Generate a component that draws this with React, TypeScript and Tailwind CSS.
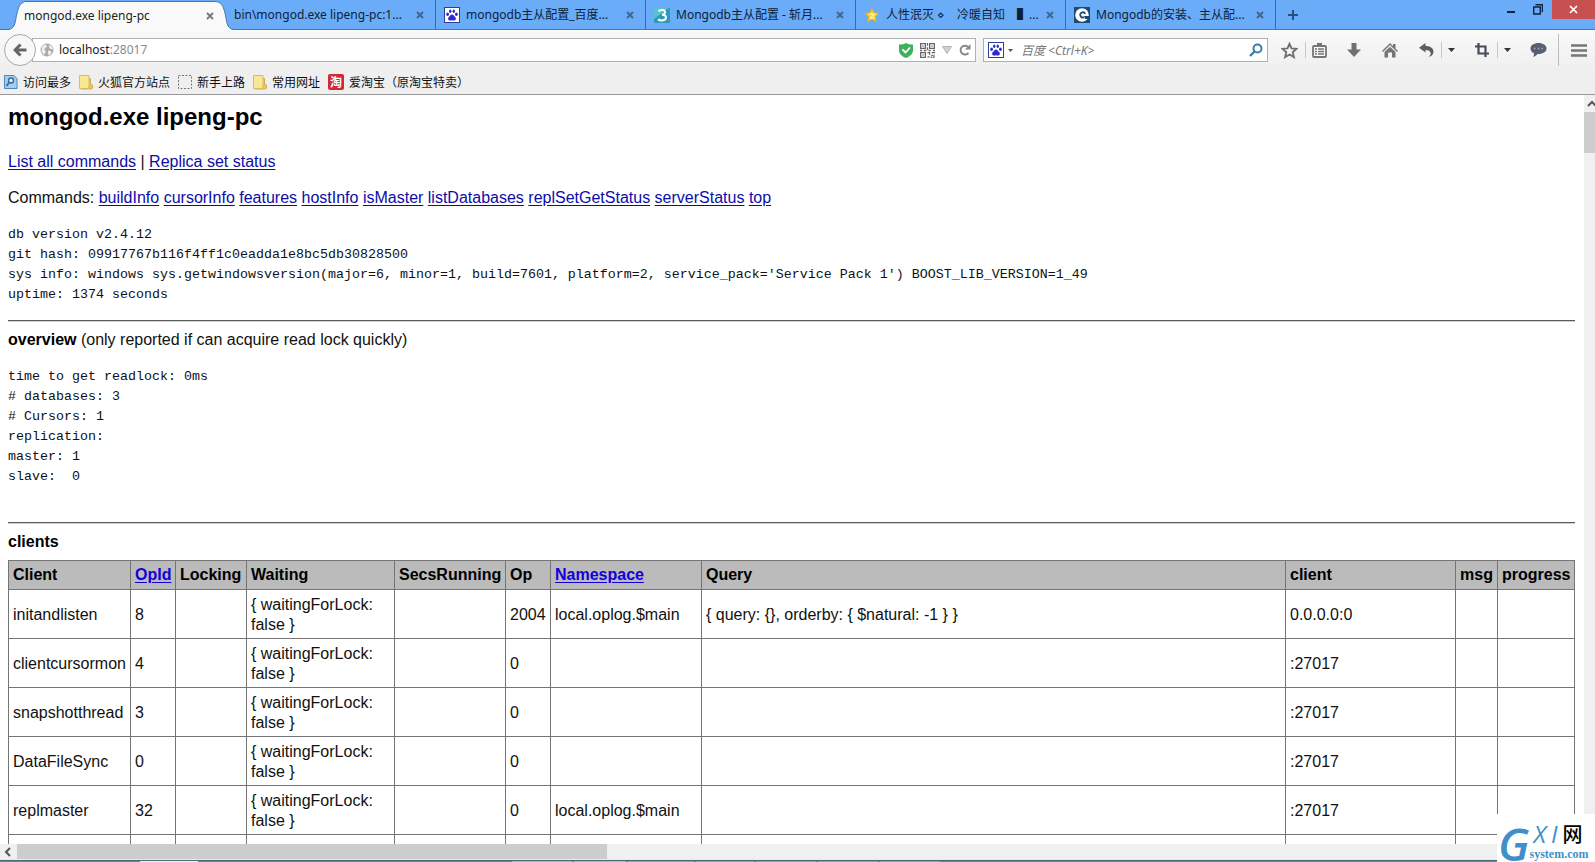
import type { ReactNode } from "react";

const UI = "font-['Noto_Sans','Noto_Sans_CJK_SC',sans-serif]";

function Paw({ boxed = true }: { boxed?: boolean }) {
  return (
    <svg width="16" height="16" viewBox="0 0 16 16" className="shrink-0" aria-hidden="true">
      <rect x="0.5" y="0.5" width="15" height="15" fill="#fff" stroke={boxed ? "#2a3f9a" : "#fff"} />
      <g fill="#2a2ad0">
        <ellipse cx="3.6" cy="7.2" rx="1.4" ry="1.7" />
        <ellipse cx="6.2" cy="4.2" rx="1.2" ry="1.8" />
        <ellipse cx="9.8" cy="4.2" rx="1.2" ry="1.8" />
        <ellipse cx="12.4" cy="7.2" rx="1.4" ry="1.7" />
        <path d="M8 7.400c1.500 0 2 1.500 3.100 2.500 1.400 1.300.8 3.700-1.100 3.700-.8 0-1.300-.3-2-.3s-1.200.3-2 .3c-1.900 0-2.500-2.400-1.100-3.700C6 8.900 6.500 7.400 8 7.400z" />
      </g>
    </svg>
  );
}

function SpiralIcon() {
  return (
    <svg width="16" height="16" viewBox="0 0 16 16" className="shrink-0" aria-hidden="true">
      <rect width="16" height="16" rx="1" fill="#2a9bb8" />
      <path d="M0 0h16L0 12z" fill="#5cc0d4" />
      <path d="M4.500 4.300C6.500 2.400 11 2.600 11 5.200c0 1.600-1.500 2.300-3 2.500 2 0 4 .8 4 2.800 0 3-4.800 3.600-8 2" fill="none" stroke="#fff" strokeWidth="2" />
    </svg>
  );
}

function StarIcon() {
  return (
    <svg width="16" height="16" viewBox="0 0 16 16" className="shrink-0" aria-hidden="true">
      <path d="M8 1.500l2 4.300 4.800.6-3.500 3.300.9 4.800L8 12.200l-4.200 2.300.9-4.800L1.200 6.400 6 5.800z" fill="#fbd22c" stroke="#e8b21c" strokeWidth="1" strokeLinejoin="round" />
      <path d="M5.500 7.200h5l-4 3.600h4.200" fill="none" stroke="#fff3a8" strokeWidth="1.200" />
    </svg>
  );
}

function CIcon() {
  return (
    <svg width="16" height="16" viewBox="0 0 16 16" className="shrink-0" aria-hidden="true">
      <rect width="16" height="16" fill="#1d4a72" />
      <circle cx="8" cy="8" r="6.800" fill="#fff" />
      <path d="M12.500 5.500A4.300 4.300 0 1 0 11 12l-1-2.200A2 2 0 1 1 10 6.500l2.500 1z" fill="#1d4a72" transform="translate(1.600 1.400) scale(.8)" />
      <path d="M10 9h6v3h-5z" fill="#1d4a72" />
    </svg>
  );
}

function CloseGlyph({ color = "#3f6590" }: { color?: string }) {
  return (
    <svg width="8" height="8" viewBox="0 0 8 8" className="block" aria-hidden="true">
      <path d="M1 1l6 6M7 1L1 7" stroke={color} strokeWidth="1.900" />
    </svg>
  );
}

function Tab({ title, icon }: { title: string; icon?: ReactNode }) {
  return (
    <div role="tab" aria-selected="false" className="flex h-full w-[210px] min-w-0 items-center gap-1.5 border-r border-[#3a6a9e] pr-[11px] pl-2 text-[#0b1f38]">
      {icon}
      <span className="min-w-0 flex-1 whitespace-pre">{title}</span>
      <button type="button" aria-label="关闭标签页">
        <CloseGlyph />
      </button>
    </div>
  );
}

function TabStrip() {
  return (
    <div className="flex h-[30px] shrink-0 items-stretch border-b border-[#4579ad] bg-[#6aacf8] text-[12px]">
      <div role="tablist" className="flex min-w-0 items-stretch">
        <div role="tab" aria-selected="true" className="-mb-px ml-2 flex w-[226px] items-stretch pt-px">
          <svg width="20" height="29" viewBox="0 0 20 29" className="shrink-0" aria-hidden="true">
            <path d="M0 29C8 28 7 20 9 12 11 4 13 .5 20 .5V29z" fill="#f9f9f9" />
            <path d="M0 28.500C8 27.500 7 20 9 12 11 4 13 .5 20 .5" fill="none" stroke="#4579ad" />
          </svg>
          <div className="-ml-1 flex min-w-0 flex-1 items-center border-t border-[#4579ad] bg-[#f9f9f9] text-[#222]">
            <span className="min-w-0 flex-1 whitespace-nowrap">mongod.exe lipeng-pc</span>
            <button type="button" aria-label="关闭标签页">
              <CloseGlyph color="#7a7a7a" />
            </button>
          </div>
          <svg width="20" height="29" viewBox="0 0 20 29" className="shrink-0" aria-hidden="true">
            <path d="M20 29C12 28 13 20 11 12 9 4 7 .5 0 .5V29z" fill="#f9f9f9" />
            <path d="M20 28.500C12 27.500 13 20 11 12 9 4 7 .5 0 .5" fill="none" stroke="#4579ad" />
          </svg>
        </div>
        <div className="-ml-2 flex min-w-0">
          <Tab title="bin\mongod.exe lipeng-pc:1..." />
          <Tab title="mongodb主从配置_百度..." icon={<Paw />} />
          <Tab title="Mongodb主从配置 - 斩月..." icon={<SpiralIcon />} />
          <Tab title="人性泯灭 ⋄　冷暖自知　▌..." icon={<StarIcon />} />
          <Tab title="Mongodb的安装、主从配..." icon={<CIcon />} />
        </div>
      </div>
      <button type="button" aria-label="打开新标签页" className="ml-3 flex items-center">
        <svg width="10" height="10" viewBox="0 0 10 10" aria-hidden="true">
          <path d="M5 0v10M0 5h10" stroke="#27507e" strokeWidth="2" />
        </svg>
      </button>
      <div className="ml-auto flex items-start">
        <button type="button" aria-label="最小化" className="mt-[3px] px-[9px]">
          <svg width="8" height="12" viewBox="0 0 8 12" aria-hidden="true">
            <path d="M0 9h8" stroke="#0c2440" strokeWidth="2" />
          </svg>
        </button>
        <button type="button" aria-label="还原" className="mt-[3px] px-[9px]">
          <svg width="10" height="12" viewBox="0 0 10 12" aria-hidden="true">
            <path d="M.75 4h6.500v7H.75zM2.500 1.700h6.900v7.500" fill="none" stroke="#0c2440" strokeWidth="1.400" />
          </svg>
        </button>
        <button type="button" aria-label="关闭" className="flex h-[19px] w-[43px] items-center justify-center bg-[#c75050]">
          <svg width="9" height="9" viewBox="0 0 9 9" aria-hidden="true">
            <path d="M1 1l7 7M8 1L1 8" stroke="#fff" strokeWidth="1.700" />
          </svg>
        </button>
      </div>
    </div>
  );
}

function ToolButton({ label, children, className = "" }: { label: string; children: ReactNode; className?: string }) {
  return (
    <button type="button" aria-label={label} className={`flex h-5 shrink-0 items-center justify-center ${className}`}>
      {children}
    </button>
  );
}

function Caret() {
  return (
    <svg width="7" height="4" viewBox="0 0 7 4" aria-hidden="true">
      <path d="M0 0h7L3.500 4z" fill="#333" />
    </svg>
  );
}

function Toolbar() {
  return (
    <div className="flex h-10 shrink-0 items-center bg-linear-to-b from-[#f9f9f9] to-[#efefef] pl-1 text-[12px]">
      <button type="button" aria-label="后退" className="z-10 flex size-8 shrink-0 items-center justify-center rounded-full border border-[#a8a8a8] bg-[#f8f8f8]">
        <svg width="14" height="14" viewBox="0 0 14 14" aria-hidden="true">
          <path d="M7.500 1.500L2 7l5.500 5.500M2.500 7H13.500" fill="none" stroke="#666" strokeWidth="3" />
        </svg>
      </button>
      <div className="-ml-1 flex h-6 min-w-0 flex-1 items-center border border-[#b0b0b0] bg-white pr-1 pl-[7px]">
        <svg width="14" height="14" viewBox="0 0 14 14" className="shrink-0" aria-hidden="true">
          <circle cx="7" cy="7" r="6.500" fill="#a9a9a9" />
          <path d="M2 3.500l3-2 2 1-1 2.500-2 1 1.500 1.500v2L4 12 1.500 8.500zM8.500 2l3 1 1.500 3-2 .5-1.500-1.500zM8 7.500l3 .5.500 2-2.500 3-1-2.500z" fill="#eee" />
        </svg>
        <label className="sr-only" htmlFor="address">地址</label>
        <div className="relative ml-[5px] flex h-full min-w-0 flex-1 items-center">
          <input id="address" defaultValue="localhost:28017" className="h-full w-full bg-transparent text-transparent outline-none" />
          <div aria-hidden="true" className="pointer-events-none absolute inset-0 flex items-center text-[#1a1a1a]">
            localhost<span className="text-[#8a8a8a]">:28017</span>
          </div>
        </div>
        <div className="flex items-center gap-[7px]">
          <svg width="14" height="15" viewBox="0 0 14 15" aria-hidden="true">
            <path d="M0 1.500C3 1.500 5 1 7 0c2 1 4 1.500 7 1.500V7c0 4-3 6.500-7 8-4-1.500-7-4-7-8z" fill="#3fb05b" />
            <path d="M3.500 6.500l3 3 4.500-5" fill="none" stroke="#fff" strokeWidth="1.800" />
          </svg>
          <svg width="15" height="15" viewBox="0 0 14 14" aria-hidden="true" fill="none" stroke="#666" strokeWidth="1.200">
            <path d="M.6.6h4.400v4.400H.6zM9 .6h4.400v4.400H9zM.6 9h4.400v4.400H.6z" />
            <path d="M2.300 2.800h1M10.700 2.800h1M2.300 11.200h1M7 0v2.500M7 4v2.500M0 7h2M3.500 7h2.500M8 7h2M12 7h2M7 9h2v2M11 9h3M7 13h2M10.500 11.500H12M13 11v3M10 13.300h1.500" />
          </svg>
          <svg width="10" height="8" viewBox="0 0 10 8" aria-hidden="true">
            <path d="M.5.5h9L5 7.500z" fill="#d0d0d0" stroke="#b4b4b4" />
          </svg>
          <button type="button" aria-label="刷新">
            <svg width="12" height="12" viewBox="0 0 12 12" className="block" aria-hidden="true">
              <path d="M9.500 8.800A4.400 4.400 0 1 1 9 2.900" fill="none" stroke="#888" strokeWidth="1.900" />
              <path d="M11.500 0v5.500H6z" fill="#888" />
            </svg>
          </button>
        </div>
      </div>
      <div className="ml-[7px] flex h-6 w-[285px] items-center border border-[#b0b0b0] bg-white px-1">
        <Paw />
        <svg width="5" height="3" viewBox="0 0 5 3" className="ml-1 shrink-0" aria-hidden="true">
          <path d="M0 0h5L2.500 3z" fill="#555" />
        </svg>
        <label className="sr-only" htmlFor="search">搜索</label>
        <input id="search" placeholder="百度 <Ctrl+K>" className="mx-2 h-full min-w-0 flex-1 bg-transparent italic outline-none placeholder:text-[#777]" />
        <button type="button" aria-label="搜索">
          <svg width="14" height="14" viewBox="0 0 14 14" className="block" aria-hidden="true">
            <circle cx="8.500" cy="5.500" r="4" fill="none" stroke="#3a7fa5" strokeWidth="2" />
            <path d="M5.500 8.500L1 13" stroke="#3a7fa5" strokeWidth="2.400" />
          </svg>
        </button>
      </div>
      <div className="flex shrink-0 items-center pl-3">
        <ToolButton label="收藏" className="w-[18px]">
          <svg width="17" height="17" viewBox="0 0 17 17" aria-hidden="true">
            <path d="M8.500 1.800l2 4.600 5 .5-3.800 3.300 1.200 4.900-4.400-2.600-4.400 2.600 1.200-4.900L1.500 6.900l5-.5z" fill="#fafafa" stroke="#707070" strokeWidth="1.900" />
          </svg>
        </ToolButton>
        <span className="ml-[7px] h-4 w-px bg-[#c8c8c8]" />
        <ToolButton label="书签" className="ml-[5px] w-[17px]">
          <svg width="15" height="15" viewBox="0 0 15 15" aria-hidden="true">
            <rect x="1" y="3" width="13" height="11" rx="1" fill="#fafafa" stroke="#757575" strokeWidth="1.800" />
            <path d="M5 0h5v3H5z" fill="#757575" />
            <path d="M3 6h2M6 6h6M3 8.500h2M6 8.500h6M3 11h2M6 11h6" stroke="#757575" strokeWidth="1.300" />
          </svg>
        </ToolButton>
        <ToolButton label="下载" className="ml-[18px] w-4">
          <svg width="14" height="14" viewBox="0 0 14 14" aria-hidden="true">
            <path d="M4.500 0h5v6.500H14L7 14 0 6.500h4.500z" fill="#707070" />
          </svg>
        </ToolButton>
        <ToolButton label="主页" className="ml-5 w-4">
          <svg width="16" height="15" viewBox="0 0 16 15" aria-hidden="true">
            <path d="M8 0l3 3V1h2.500v4.500L16 8l-1 1-7-7-7 7-1-1z" fill="#757575" />
            <path d="M8 3.800L13.500 9v5.500H10V9.500H6v5H2.500V9z" fill="#757575" />
          </svg>
        </ToolButton>
        <ToolButton label="撤销" className="ml-5 w-4">
          <svg width="15" height="14" viewBox="0 0 15 14" aria-hidden="true">
            <path d="M0 4.800L6.500 0v3C12 3 14.500 5.500 14.500 8.500c0 3-2 5-5 5.200 2-1.300 2.500-2.700 2-4.200C11 8 9.500 7 6.500 7v2.600z" fill="#5a5f66" />
          </svg>
        </ToolButton>
        <span className="ml-[7px] h-4 w-px bg-[#c8c8c8]" />
        <ToolButton label="撤销列表" className="ml-[5px] w-2">
          <Caret />
        </ToolButton>
        <ToolButton label="截图" className="ml-[19px] w-4">
          <svg width="14" height="14" viewBox="0 0 14 14" aria-hidden="true">
            <path d="M3.500 0v10.500H14M0 3.500h10.500V14" fill="none" stroke="#444c58" strokeWidth="2.200" />
          </svg>
        </ToolButton>
        <span className="ml-[7px] h-4 w-px bg-[#c8c8c8]" />
        <ToolButton label="截图选项" className="ml-[5px] w-2">
          <Caret />
        </ToolButton>
        <ToolButton label="聊天" className="ml-[19px] w-[17px]">
          <svg width="17" height="14" viewBox="0 0 17 14" aria-hidden="true">
            <path d="M8.500 0C13 0 16.500 2.300 16.500 5.500S13 11 8.500 11l-1 0c-1 1.500-2.500 2.500-4.500 2.800.8-1 1.200-2 1-3.500C1.800 9.300.5 7.500.5 5.500.5 2.300 4 0 8.500 0z" fill="#566070" />
            <path d="M4 5.500h1.500M7.800 5.500h1.500M11.500 5.500H13" stroke="#aab" strokeWidth="1.300" />
          </svg>
        </ToolButton>
        <span className="ml-[11px] h-8 w-px bg-[#bdbdbd]" />
        <ToolButton label="菜单" className="mr-2 ml-3 w-4">
          <svg width="16" height="13" viewBox="0 0 16 13" aria-hidden="true">
            <path d="M0 1.500h16M0 6.500h16M0 11.500h16" stroke="#777" strokeWidth="2.600" strokeLinecap="butt" />
          </svg>
        </ToolButton>
      </div>
    </div>
  );
}

function Folder() {
  return (
    <svg width="14" height="16" viewBox="0 0 14 16" aria-hidden="true">
      <path d="M2 4.500h9.500v6l2 .5v3l-1 1H2z" fill="#ecc85a" stroke="#cfae52" />
      <path d="M.5 1.500h9.500v10l-1 3H.5z" fill="#f9e795" stroke="#d9bd60" />
    </svg>
  );
}

const bookmarks: { title: string; icon: ReactNode }[] = [
  {
    title: "访问最多",
    icon: (
      <svg width="14" height="16" viewBox="0 0 14 16" aria-hidden="true">
        <path d="M.5 1.500h9.500l3 3v10H.5z" fill="#a8cdea" stroke="#4d88b8" />
        <circle cx="7" cy="6.500" r="2.500" fill="#e4f1fb" stroke="#2f6ea5" strokeWidth="1.400" />
        <path d="M5 8.500L2.500 12" stroke="#2f6ea5" strokeWidth="1.800" />
      </svg>
    ),
  },
  { title: "火狐官方站点", icon: <Folder /> },
  {
    title: "新手上路",
    icon: (
      <svg width="14" height="14" viewBox="0 0 14 14" aria-hidden="true">
        <rect x="0.500" y="0.500" width="13" height="13" fill="none" stroke="#777" strokeDasharray="2 1.500" />
      </svg>
    ),
  },
  { title: "常用网址", icon: <Folder /> },
  {
    title: "爱淘宝（原淘宝特卖）",
    icon: <span className="flex size-4 items-center justify-center rounded-[2px] bg-[#cf2a35] text-[12px] leading-none font-bold text-white">淘</span>,
  },
];

function BookmarksBar() {
  return (
    <nav aria-label="书签工具栏" className="flex h-[25px] shrink-0 items-center gap-2 border-b border-[#9a9a9a] bg-[#efefef] pl-1 font-['Noto_Sans_CJK_SC',sans-serif] text-[12px] text-[#111]">
      {bookmarks.map((b) => (
        <a key={b.title} href="#" className="flex items-center gap-[5px] leading-4 whitespace-nowrap">
          {b.icon}
          {b.title}
        </a>
      ))}
    </nav>
  );
}

const commands = ["buildInfo", "cursorInfo", "features", "hostInfo", "isMaster", "listDatabases", "replSetGetStatus", "serverStatus", "top"];

const buildText = `db version v2.4.12
git hash: 09917767b116f4ff1c0eadda1e8bc5db30828500
sys info: windows sys.getwindowsversion(major=6, minor=1, build=7601, platform=2, service_pack='Service Pack 1') BOOST_LIB_VERSION=1_49
uptime: 1374 seconds`;

const overviewText = `time to get readlock: 0ms
# databases: 3
# Cursors: 1
replication:
master: 1
slave:  0`;

const wait = "{ waitingForLock: false }";
const rows: string[][] = [
  ["initandlisten", "8", "", wait, "", "2004", "local.oplog.$main", "{ query: {}, orderby: { $natural: -1 } }", "0.0.0.0:0", "", ""],
  ["clientcursormon", "4", "", wait, "", "0", "", "", ":27017", "", ""],
  ["snapshotthread", "3", "", wait, "", "0", "", "", ":27017", "", ""],
  ["DataFileSync", "0", "", wait, "", "0", "", "", ":27017", "", ""],
  ["replmaster", "32", "", wait, "", "0", "local.oplog.$main", "", ":27017", "", ""],
  ["", "", "", "", "", "", "", "", "", "", ""],
];

const columns: { name: string; width: string; link?: boolean }[] = [
  { name: "Client", width: "w-[122px]" },
  { name: "OpId", width: "w-[45px]", link: true },
  { name: "Locking", width: "w-[71px]" },
  { name: "Waiting", width: "w-[148px]" },
  { name: "SecsRunning", width: "w-[111px]" },
  { name: "Op", width: "w-[45px]" },
  { name: "Namespace", width: "w-[151px]", link: true },
  { name: "Query", width: "" },
  { name: "client", width: "w-[170px]" },
  { name: "msg", width: "w-[42px]" },
  { name: "progress", width: "w-[77px]" },
];

const link = "text-[#0c0ca8] underline underline-offset-2";

function Divider() {
  return <hr className="mt-[15px] mb-2 h-0.5 border-t border-b border-t-[#5c5c5c] border-b-[#cfcfcf]" />;
}

function StatusPage() {
  return (
    <main className="min-w-0 flex-1 overflow-hidden bg-white pt-[7px] pr-[9px] pl-2 font-['Liberation_Sans',Arial,sans-serif] text-[16px] leading-5 text-[#111]">
      <h1 className="text-2xl leading-[30px] font-bold text-black">mongod.exe lipeng-pc</h1>
      <p className="mt-5">
        <a href="#" className={link}>List all commands</a> | <a href="#" className={link}>Replica set status</a>
      </p>
      <p className="mt-4">
        Commands:{" "}
        {commands.map((c) => (
          <span key={c}>
            <a href="#" className={link}>{c}</a>{" "}
          </span>
        ))}
      </p>
      <pre className="mt-[17px] font-['Liberation_Mono',monospace] text-[10pt] leading-5">{buildText}</pre>
      <Divider />
      <p>
        <strong className="text-black">overview</strong> (only reported if can acquire read lock quickly)
      </p>
      <pre className="mt-[17px] pb-5 font-['Liberation_Mono',monospace] text-[10pt] leading-5">{overviewText}</pre>
      <Divider />
      <h2 className="font-bold text-black">clients</h2>
      <table className="mt-2 w-full table-fixed border-collapse">
        <thead>
          <tr className="bg-[#bbb]">
            {columns.map((c) => (
              <th key={c.name} className={`h-[29px] border border-[#757575] px-1 text-left font-bold text-black ${c.width}`}>
                {c.link ? <a href="#" className="text-[#1400dc] underline underline-offset-2">{c.name}</a> : c.name}
              </th>
            ))}
          </tr>
        </thead>
        <tbody>
          {rows.map((r, i) => (
            <tr key={i}>
              {r.map((cell, j) => (
                <td key={j} className="h-[49px] border border-[#757575] px-1 pt-0.5 align-middle">{cell}</td>
              ))}
            </tr>
          ))}
        </tbody>
      </table>
    </main>
  );
}

function Watermark() {
  return (
    <div className="absolute right-0 bottom-0 flex h-12 w-[98px] items-end bg-white pl-px text-[#3f8fc8]">
      <span className="font-['Open_Sans',sans-serif] text-[46px] leading-[38px] font-semibold italic">G</span>
      <span className="flex flex-col pb-0.5">
        <span className="flex items-center gap-[5px] pl-1 font-['Open_Sans',sans-serif] text-[24px] leading-7 font-medium italic">
          <span>X</span>
          <span>I</span>
          <span className="font-['Noto_Sans_CJK_SC',sans-serif] text-[20px] font-medium text-black not-italic">网</span>
        </span>
        <span className="font-['Liberation_Serif',serif] text-[12px] leading-3 font-bold">system.com</span>
      </span>
    </div>
  );
}

function TaskbarEdge() {
  return (
    <div className="h-[3px] shrink-0 border-t border-[#dceefa] bg-[#5b86ad]">
      <div className="flex h-0.5 gap-0.5 border-t border-[#48698a]">
        <span className="w-[138px]" />
        <span className="w-[58px] bg-[#e8f2fa]" />
        <span className="w-[310px]" />
        <span className="w-[60px] bg-[#9dbad2]" />
        <span className="w-[52px] bg-[#9dbad2]" />
        <span className="w-[66px] bg-[#7fa3c2]" />
        <span className="w-[58px] bg-[#7fa3c2]" />
        <span className="w-[60px] bg-[#7fa3c2]" />
        <span className="w-[60px] bg-[#7fa3c2]" />
        <span className="w-[60px] bg-[#7fa3c2]" />
      </div>
    </div>
  );
}

export default function App() {
  return (
    <div className={`relative flex h-screen flex-col overflow-hidden bg-white ${UI}`}>
      <TabStrip />
      <Toolbar />
      <BookmarksBar />
      <div className="flex min-h-0 flex-1">
        <StatusPage />
        <div className="flex w-[11px] shrink-0 flex-col overflow-hidden bg-[#f0f0f0]">
          <svg width="11" height="17" viewBox="0 0 11 17" className="shrink-0" aria-hidden="true">
            <path d="M4 11l4-4 4 4" fill="none" stroke="#555" strokeWidth="2" />
          </svg>
          <div className="h-[41px] bg-[#cdcdcd]" />
        </div>
      </div>
      <div className="flex h-[15px] shrink-0 bg-[#f0f0f0]">
        <svg width="17" height="15" viewBox="0 0 17 15" className="shrink-0" aria-hidden="true">
          <path d="M10 4L6 8l4 4" fill="none" stroke="#555" strokeWidth="2" />
        </svg>
        <div className="w-[37%] bg-[#cdcdcd]" />
      </div>
      <TaskbarEdge />
      <Watermark />
    </div>
  );
}
